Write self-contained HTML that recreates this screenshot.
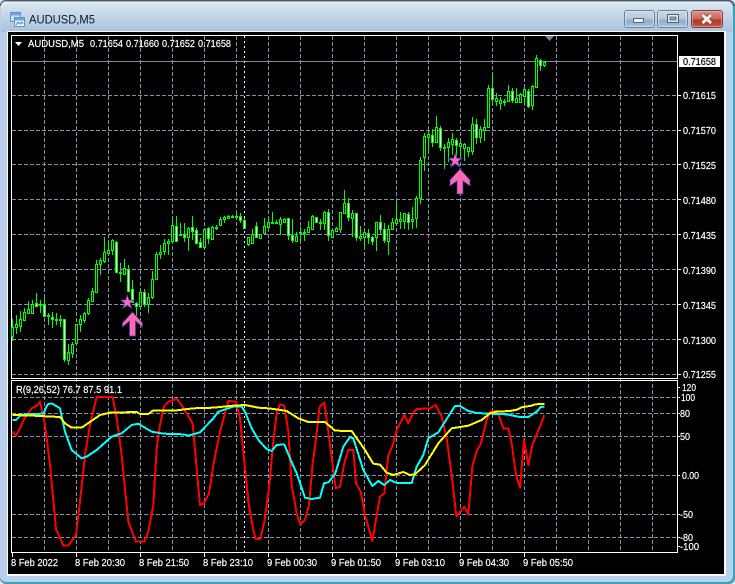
<!DOCTYPE html>
<html><head><meta charset="utf-8"><title>AUDUSD,M5</title>
<style>
html,body{margin:0;padding:0;width:735px;height:584px;overflow:hidden;background:#dfe8f0}
svg{display:block;position:absolute;left:0;top:0}
text{font-family:"Liberation Sans",sans-serif;font-size:10.5px;fill:#fff;stroke:#fff;stroke-width:.2}
</style></head><body>
<svg width="735" height="584" viewBox="0 0 735 584" xmlns="http://www.w3.org/2000/svg">
<defs>
<linearGradient id="tg" x1="0" y1="0" x2="0" y2="1"><stop offset="0" stop-color="#dce6f0"/><stop offset="1" stop-color="#a8c3df"/></linearGradient>
<linearGradient id="b1" x1="0" y1="0" x2="0" y2="1"><stop offset="0" stop-color="#c9d9e8"/><stop offset=".5" stop-color="#b4c9de"/><stop offset=".55" stop-color="#94aec9"/><stop offset="1" stop-color="#a9c2da"/></linearGradient>
<linearGradient id="b2" x1="0" y1="0" x2="0" y2="1"><stop offset="0" stop-color="#dd9588"/><stop offset=".5" stop-color="#c9685a"/><stop offset=".55" stop-color="#b23322"/><stop offset="1" stop-color="#c4574a"/></linearGradient>
</defs>
<!-- window frame -->
<rect x="0" y="0" width="735" height="584" rx="6" fill="#3f9fb5"/>
<rect x="0" y="1" width="733" height="581" rx="6" fill="#b9d1ea"/>
<path d="M1 7Q1 2 6 2H727Q732 2 732 7V32H1Z" fill="url(#tg)"/>
<path d="M6 .5H728Q733 .5 734 6" fill="none" stroke="#4c5865" stroke-width="1.4"/>
<path d="M6 .5Q1 .5 .5 6" fill="none" stroke="#4c5865" stroke-width="1"/>
<path d="M2 8Q2 3 6 3H728" fill="none" stroke="#eef3f8" stroke-width="1"/>
<rect x="7" y="31" width="719" height="545" fill="#f4f8fc"/>
<rect x="8" y="32" width="716" height="542" fill="#000"/>
<!-- app icon -->
<rect x="10.500" y="12.500" width="10" height="9" fill="#cfe4f7" stroke="#5b93c9"/>
<rect x="11" y="13" width="9" height="2.500" fill="#6ea7dc"/>
<rect x="14.500" y="17.500" width="10" height="9" fill="#eaf4fc" stroke="#5b93c9"/>
<rect x="15" y="18" width="9" height="2.500" fill="#6ea7dc"/>
<path d="M16 25L18 22L19.500 24L21.500 22L23 24" fill="none" stroke="#3a78b5" stroke-width=".9"/>
<text x="29" y="23.500" style="font-size:12px;fill:#10141c;stroke:none" textLength="66" lengthAdjust="spacingAndGlyphs">AUDUSD,M5</text>
<!-- buttons -->
<rect x="624.500" y="10.500" width="30" height="17" rx="2.500" fill="url(#b1)" stroke="#6b7f95"/>
<rect x="625.500" y="11.500" width="28" height="15" rx="1.500" fill="none" stroke="#dfe9f2" stroke-opacity=".7"/>
<rect x="633.500" y="18.500" width="10" height="4" fill="#f2f5f8" stroke="#56687c"/>
<rect x="657.500" y="10.500" width="30" height="17" rx="2.500" fill="url(#b1)" stroke="#6b7f95"/>
<rect x="658.500" y="11.500" width="28" height="15" rx="1.500" fill="none" stroke="#dfe9f2" stroke-opacity=".7"/>
<rect x="667.500" y="14.500" width="11" height="8" fill="#e8eef4" stroke="#4c5e74"/>
<rect x="670" y="17" width="6" height="3" fill="#8ea6bf" stroke="#4c5e74" stroke-width=".8"/>
<rect x="691.500" y="10.500" width="31" height="17" rx="2.500" fill="url(#b2)" stroke="#7a3b36"/>
<rect x="692.500" y="11.500" width="29" height="15" rx="1.500" fill="none" stroke="#efc5bc" stroke-opacity=".55"/>
<path d="M702.500 15L711 23M711 15L702.500 23" stroke="#6e3a36" stroke-width="4.500" fill="none"/>
<path d="M702.500 15L711 23M711 15L702.500 23" stroke="#f4f0ee" stroke-width="3" fill="none"/>
<!-- grid -->
<g stroke="#8494a8" stroke-width="1" stroke-dasharray="4 2" fill="none" shape-rendering="crispEdges">
<path d="M44.500 36V552M76.500 36V552M108.500 36V552M140.500 36V552M172.500 36V552M204.500 36V552M236.500 36V552M268.500 36V552M300.500 36V552M332.500 36V552M364.500 36V552M396.500 36V552M428.500 36V552M460.500 36V552M492.500 36V552M524.500 36V552M556.500 36V552M588.500 36V552M620.500 36V552M652.500 36V552"/>
<path d="M12 95.500H677M12 130.500H677M12 164.500H677M12 199.500H677M12 234.500H677M12 269.500H677M12 304.500H677M12 339.500H677M12 374.500H677"/>
<path d="M12 397.500H677M12 413.500H677M12 436.500H677M12 475.500H677M12 514.500H677M12 537.500H677"/>
</g>
<path d="M12 61.500H677" stroke="#778899" shape-rendering="crispEdges"/>
<path d="M244.500 36V552" stroke="#fff" stroke-dasharray="2 3" shape-rendering="crispEdges"/>
<!-- chart frames -->
<g fill="none" stroke="#fff" shape-rendering="crispEdges">
<rect x="11.500" y="35.500" width="666" height="343"/>
<rect x="11.500" y="380.500" width="666" height="172"/>
<path d="M12.500 553V557M76.500 553V557M140.500 553V557M204.500 553V557M268.500 553V557M332.500 553V557M396.500 553V557M460.500 553V557M524.500 553V557"/>
<path d="M678 95.500H681M678 130.500H681M678 164.500H681M678 199.500H681M678 234.500H681M678 269.500H681M678 304.500H681M678 339.500H681M678 374.500H681M678 387.500H680M678 397.500H680M678 413.500H680M678 436.500H680M678 475.500H680M678 514.500H680M678 537.500H680M678 546.500H680"/>
</g>
<path d="M545 36H554L549.500 41Z" fill="#778899"/>
<path d="M15 42H22L18.500 46Z" fill="#fff"/>
<!-- candle wicks -->
<path shape-rendering="crispEdges" fill="none" stroke="#00ff00" d="M12.500 319V341M16.500 315V334M20.500 311V332M24.500 308V320M28.500 301V313M32.500 300V313M36.500 293V307M40.500 300V313M44.500 298V317M48.500 313V325M52.500 312V328M56.500 313V325M60.500 315V327M64.500 319V362M68.500 344V365M72.500 342V358M76.500 324V344M80.500 315V332M84.500 312V323M88.500 298V315M92.500 288V302M96.500 260V293M100.500 258V275M104.500 237V263M108.500 243V255M112.500 239V255M116.500 241V273M120.500 263V282M124.500 259V275M128.500 265V292M132.500 280V303M136.500 302V316M140.500 291V307M144.500 289V307M148.500 293V313M152.500 271V299M156.500 252V280M160.500 245V259M164.500 239V255M168.500 239V255M172.500 216V243M176.500 216V242M180.500 223V236M184.500 223V242M188.500 227V251M192.500 216V240M196.500 228V244M200.500 238V247M204.500 228V247M208.500 227V244M212.500 226V239M216.500 225V230M220.500 217V226M224.500 216V223M228.500 215V219M232.500 215V217M236.500 213V218M240.500 213V223M244.500 218V229M248.500 237V246M252.500 229V243M256.500 222V237M260.500 234V238M264.500 218V234M268.500 217V227M272.500 212V223M276.500 220V223M280.500 217V235M284.500 218V222M288.500 218V240M292.500 219V243M296.500 232V242M300.500 227V242M304.500 229V241M308.500 221V233M312.500 215V229M316.500 217V223M320.500 219V230M324.500 211V230M328.500 209V241M332.500 230V237M336.500 227V232M340.500 212V233M344.500 190V213M348.500 198V221M352.500 210V237M356.500 213V241M360.500 226V241M364.500 232V247M368.500 229V244M372.500 236V245M376.500 222V251M380.500 215V234M384.500 223V243M388.500 225V255M392.500 218V230M396.500 202V223M400.500 212V229M404.500 213V229M408.500 212V230M412.500 207V229M416.500 196V228M420.500 157V204M424.500 133V171M428.500 130V153M432.500 129V147M436.500 116V143M440.500 126V151M444.500 144V169M448.500 138V162M452.500 133V155M456.500 138V156M460.500 142V157M464.500 143V161M468.500 147V157M472.500 117V155M476.500 119V144M480.500 126V143M484.500 119V141M488.500 85V127M492.500 72V104M496.500 93V106M500.500 97V110M504.500 99V106M508.500 85V102M512.500 88V103M516.500 88V103M520.500 93V103M524.500 88V104M528.500 89V108M532.500 85V110M536.500 55V87M540.500 59V71M544.500 61V67"/>
<!-- bullish bodies (black) -->
<path shape-rendering="crispEdges" fill="#000" stroke="#00ff00" d="M11.500 327.500h2v9h-2zM15.500 324.500h2v3h-2zM19.500 319.500h2v7h-2zM23.500 312.500h2v8h-2zM27.500 309.500h2v4h-2zM31.500 304.500h2v9h-2zM39.500 304.500h2v1h-2zM47.500 315.500h2v1h-2zM55.500 319.500h2v1h-2zM59.500 319.500h2v1h-2zM67.500 352.500h2v8h-2zM71.500 344.500h2v9h-2zM75.500 324.500h2v19h-2zM79.500 319.500h2v5h-2zM83.500 313.500h2v7h-2zM87.500 300.500h2v13h-2zM91.500 291.500h2v10h-2zM95.500 264.500h2v28h-2zM99.500 260.500h2v4h-2zM103.500 252.500h2v9h-2zM107.500 250.500h2v3h-2zM111.500 240.500h2v10h-2zM119.500 272.500h2v1h-2zM123.500 268.500h2v6h-2zM139.500 292.500h2v14h-2zM147.500 297.500h2v7h-2zM151.500 279.500h2v18h-2zM155.500 254.500h2v25h-2zM159.500 252.500h2v2h-2zM163.500 243.500h2v8h-2zM167.500 241.500h2v2h-2zM171.500 225.500h2v16h-2zM179.500 234.500h2v1h-2zM187.500 228.500h2v9h-2zM203.500 229.500h2v18h-2zM211.500 227.500h2v12h-2zM215.500 227.500h2v1h-2zM219.500 219.500h2v6h-2zM223.500 217.500h2v2h-2zM227.500 216.500h2v2h-2zM231.500 216.500h2v1h-2zM235.500 216.500h2v1h-2zM247.500 237.500h2v7h-2zM251.500 234.500h2v9h-2zM259.500 234.500h2v4h-2zM263.500 226.500h2v7h-2zM267.500 222.500h2v5h-2zM271.500 222.500h2v1h-2zM275.500 222.500h2v1h-2zM279.500 219.500h2v5h-2zM283.500 219.500h2v3h-2zM295.500 236.500h2v5h-2zM299.500 232.500h2v1h-2zM303.500 232.500h2v1h-2zM307.500 227.500h2v5h-2zM311.500 216.500h2v13h-2zM319.500 222.500h2v1h-2zM323.500 212.500h2v11h-2zM331.500 230.500h2v7h-2zM335.500 228.500h2v3h-2zM339.500 212.500h2v17h-2zM343.500 203.500h2v10h-2zM351.500 213.500h2v5h-2zM359.500 236.500h2v2h-2zM363.500 232.500h2v5h-2zM375.500 222.500h2v15h-2zM387.500 229.500h2v12h-2zM391.500 222.500h2v7h-2zM395.500 219.500h2v4h-2zM399.500 219.500h2v2h-2zM403.500 213.500h2v8h-2zM411.500 219.500h2v2h-2zM415.500 198.500h2v20h-2zM419.500 160.500h2v38h-2zM423.500 136.500h2v21h-2zM427.500 134.500h2v3h-2zM435.500 127.500h2v15h-2zM443.500 147.500h2v1h-2zM447.500 142.500h2v5h-2zM451.500 139.500h2v5h-2zM459.500 143.500h2v3h-2zM463.500 144.500h2v4h-2zM467.500 147.500h2v4h-2zM471.500 124.500h2v27h-2zM479.500 129.500h2v8h-2zM483.500 127.500h2v3h-2zM487.500 88.500h2v39h-2zM495.500 98.500h2v3h-2zM499.500 100.500h2v3h-2zM503.500 101.500h2v1h-2zM507.500 91.500h2v10h-2zM515.500 98.500h2v4h-2zM519.500 94.500h2v8h-2zM523.500 89.500h2v7h-2zM531.500 86.500h2v19h-2zM535.500 58.500h2v29h-2zM543.500 62.500h2v3h-2z"/>
<!-- bearish bodies (white) -->
<path shape-rendering="crispEdges" fill="#fff" stroke="#00ff00" d="M35.500 303.500h2v3h-2zM43.500 304.500h2v12h-2zM51.500 317.500h2v2h-2zM63.500 319.500h2v40h-2zM115.500 242.500h2v30h-2zM127.500 269.500h2v22h-2zM131.500 289.500h2v13h-2zM135.500 303.500h2v3h-2zM143.500 292.500h2v12h-2zM175.500 226.500h2v15h-2zM183.500 234.500h2v3h-2zM191.500 227.500h2v4h-2zM195.500 230.500h2v13h-2zM199.500 242.500h2v5h-2zM207.500 228.500h2v10h-2zM239.500 216.500h2v4h-2zM243.500 220.500h2v8h-2zM255.500 226.500h2v11h-2zM287.500 218.500h2v17h-2zM291.500 235.500h2v5h-2zM315.500 217.500h2v5h-2zM327.500 212.500h2v23h-2zM347.500 203.500h2v14h-2zM355.500 213.500h2v24h-2zM367.500 233.500h2v4h-2zM371.500 237.500h2v4h-2zM379.500 222.500h2v7h-2zM383.500 229.500h2v11h-2zM407.500 214.500h2v8h-2zM431.500 135.500h2v7h-2zM439.500 128.500h2v19h-2zM455.500 140.500h2v5h-2zM475.500 124.500h2v13h-2zM491.500 88.500h2v11h-2zM511.500 91.500h2v9h-2zM527.500 91.500h2v15h-2zM539.500 60.500h2v5h-2z"/>
<!-- signals -->
<g stroke="#4a3aa8" stroke-width=".8" fill="#ff69b4">
<path d="M132.500 312L142.500 323V327L135.500 321V336H129.500V321L122.500 327V323Z"/>
<path d="M460 169L470 180V186L463 181V194H457V181L450 186V180Z"/>
<path d="M127.300 295L129 300H134L130 303.200L131.600 308.500L127.300 305.300L123 308.500L124.600 303.200L120.600 300H125.600Z"/>
<path d="M455.300 153L457 158.200H462.300L458 161.500L459.700 167L455.300 163.700L450.900 167L452.600 161.500L448.300 158.200H453.600Z"/>
</g>
<!-- indicator lines -->
<g fill="none" stroke-width="6" stroke-linejoin="round" shape-rendering="crispEdges">
<g transform="translate(0 375) scale(.33333)">
<polyline stroke="#ff0000" points="37,170 48,182 60,160 72,132 95,100 110,92 120,80 135,150 150,270 168,462 190,512 205,512 228,480 240,380 255,240 270,150 290,66 338,66 350,130 365,240 385,440 408,500 433,500 445,470 460,390 470,220 480,150 492,95 505,80 530,72 545,90 578,145 590,280 600,390 612,385 627,355 640,270 660,170 685,78 708,80 720,130 735,280 750,420"/>
</g>
<g transform="translate(245 375) scale(.33333)">
<polyline stroke="#ff0000" points="0,280 10,380 25,465 32,492 46,492 58,440 72,340 85,200 95,115 105,88 118,92 130,170 140,330 155,415 166,448 180,435 192,390 203,265 212,200 224,95 238,83 250,170 272,340 285,335 298,265 310,225 325,225 333,325 347,350 360,420 382,498 405,365 418,355 430,240 442,215 455,165 478,120 490,145 505,112 515,102 555,100 572,90 590,125 605,190 620,300 634,424 658,395 670,418 682,275 695,228 708,205 725,135 735,110"/>
</g>
<g transform="translate(490 375) scale(.33333)">
<polyline stroke="#ff0000" points="0,110 18,108 28,125 40,160 55,160 65,205 78,300 90,338 102,195 115,270 127,210 150,155 163,120"/>
</g>
<g transform="translate(0 375) scale(.33333)">
<polyline stroke="#00ffff" points="37,135 48,135 65,118 130,116 143,88 155,85 180,100 195,170 215,225 245,250 260,245 290,225 335,185 365,175 395,150 415,146 455,170 490,176 550,178 565,182 600,172 640,130 655,110 700,95 725,95 735,110"/>
</g>
<g transform="translate(245 375) scale(.33333)">
<polyline stroke="#00ffff" points="0,110 20,160 42,197 65,222 80,228 95,210 118,208 135,250 155,295 180,368 200,372 225,368 237,325 250,322 270,298 295,215 315,186 325,190 355,285 382,333 400,318 418,330 435,315 455,324 500,324 515,275 535,240 550,190 580,172 600,140 630,93 645,93 670,108 695,114 735,116"/>
</g>
<g transform="translate(490 375) scale(.33333)">
<polyline stroke="#00ffff" points="0,116 50,118 70,122 90,126 115,126 140,110 152,96 163,95"/>
</g>
<g transform="translate(0 375) scale(.33333)">
<polyline stroke="#ffff00" points="37,120 100,122 180,126 195,145 215,158 245,158 300,120 330,113 410,111 420,117 445,117 460,106 530,106 580,100 640,98 700,92 735,90"/>
</g>
<g transform="translate(245 375) scale(.33333)">
<polyline stroke="#ffff00" points="0,90 40,98 70,100 100,104 125,108 160,130 190,141 240,141 270,167 320,168 360,225 385,266 405,269 425,293 445,300 475,291 495,300 510,298 540,270 580,205 620,160 670,152 710,135 735,115"/>
</g>
<g transform="translate(490 375) scale(.33333)">
<polyline stroke="#ffff00" points="0,115 20,110 60,108 80,104 95,97 125,92 135,88 163,87"/>
</g>
</g>
<!-- header text -->
<text x="28" y="47" textLength="56" lengthAdjust="spacingAndGlyphs">AUDUSD,M5</text>
<text x="90" y="47" textLength="33" lengthAdjust="spacingAndGlyphs">0.71654</text>
<text x="126" y="47" textLength="33" lengthAdjust="spacingAndGlyphs">0.71660</text>
<text x="162" y="47" textLength="33" lengthAdjust="spacingAndGlyphs">0.71652</text>
<text x="198" y="47" textLength="33" lengthAdjust="spacingAndGlyphs">0.71658</text>
<text x="16" y="393" textLength="106" lengthAdjust="spacingAndGlyphs">R(9,26,52) 76.7 87.5 91.1</text>
<!-- price labels -->
<rect x="679" y="56" width="41" height="11" fill="#fff"/>
<text x="683" y="65" style="fill:#000;stroke:#000" textLength="33" lengthAdjust="spacingAndGlyphs">0.71658</text>
<g>
<text x="683" y="99" textLength="33" lengthAdjust="spacingAndGlyphs">0.71615</text>
<text x="683" y="134" textLength="33" lengthAdjust="spacingAndGlyphs">0.71570</text>
<text x="683" y="169" textLength="33" lengthAdjust="spacingAndGlyphs">0.71525</text>
<text x="683" y="204" textLength="33" lengthAdjust="spacingAndGlyphs">0.71480</text>
<text x="683" y="239" textLength="33" lengthAdjust="spacingAndGlyphs">0.71435</text>
<text x="683" y="274" textLength="33" lengthAdjust="spacingAndGlyphs">0.71390</text>
<text x="683" y="309" textLength="33" lengthAdjust="spacingAndGlyphs">0.71345</text>
<text x="683" y="344" textLength="33" lengthAdjust="spacingAndGlyphs">0.71300</text>
<text x="683" y="378" textLength="33" lengthAdjust="spacingAndGlyphs">0.71255</text>
<text x="682" y="391" textLength="14" lengthAdjust="spacingAndGlyphs">120</text>
<text x="681" y="401" textLength="14" lengthAdjust="spacingAndGlyphs">100</text>
<text x="680" y="417" textLength="10" lengthAdjust="spacingAndGlyphs">80</text>
<text x="680" y="440" textLength="10" lengthAdjust="spacingAndGlyphs">50</text>
<text x="682" y="479" textLength="17" lengthAdjust="spacingAndGlyphs">0.00</text>
<text x="680" y="518" textLength="13" lengthAdjust="spacingAndGlyphs">-50</text>
<text x="680" y="541" textLength="13" lengthAdjust="spacingAndGlyphs">-80</text>
<text x="680" y="550" textLength="19" lengthAdjust="spacingAndGlyphs">-100</text>
</g>
<!-- time labels -->
<text x="11" y="566" textLength="47" lengthAdjust="spacingAndGlyphs">8 Feb 2022</text>
<text x="75" y="566" textLength="50" lengthAdjust="spacingAndGlyphs">8 Feb 20:30</text>
<text x="139" y="566" textLength="50" lengthAdjust="spacingAndGlyphs">8 Feb 21:50</text>
<text x="203" y="566" textLength="50" lengthAdjust="spacingAndGlyphs">8 Feb 23:10</text>
<text x="267" y="566" textLength="50" lengthAdjust="spacingAndGlyphs">9 Feb 00:30</text>
<text x="331" y="566" textLength="50" lengthAdjust="spacingAndGlyphs">9 Feb 01:50</text>
<text x="395" y="566" textLength="50" lengthAdjust="spacingAndGlyphs">9 Feb 03:10</text>
<text x="459" y="566" textLength="50" lengthAdjust="spacingAndGlyphs">9 Feb 04:30</text>
<text x="523" y="566" textLength="50" lengthAdjust="spacingAndGlyphs">9 Feb 05:50</text>
</svg>
</body></html>
